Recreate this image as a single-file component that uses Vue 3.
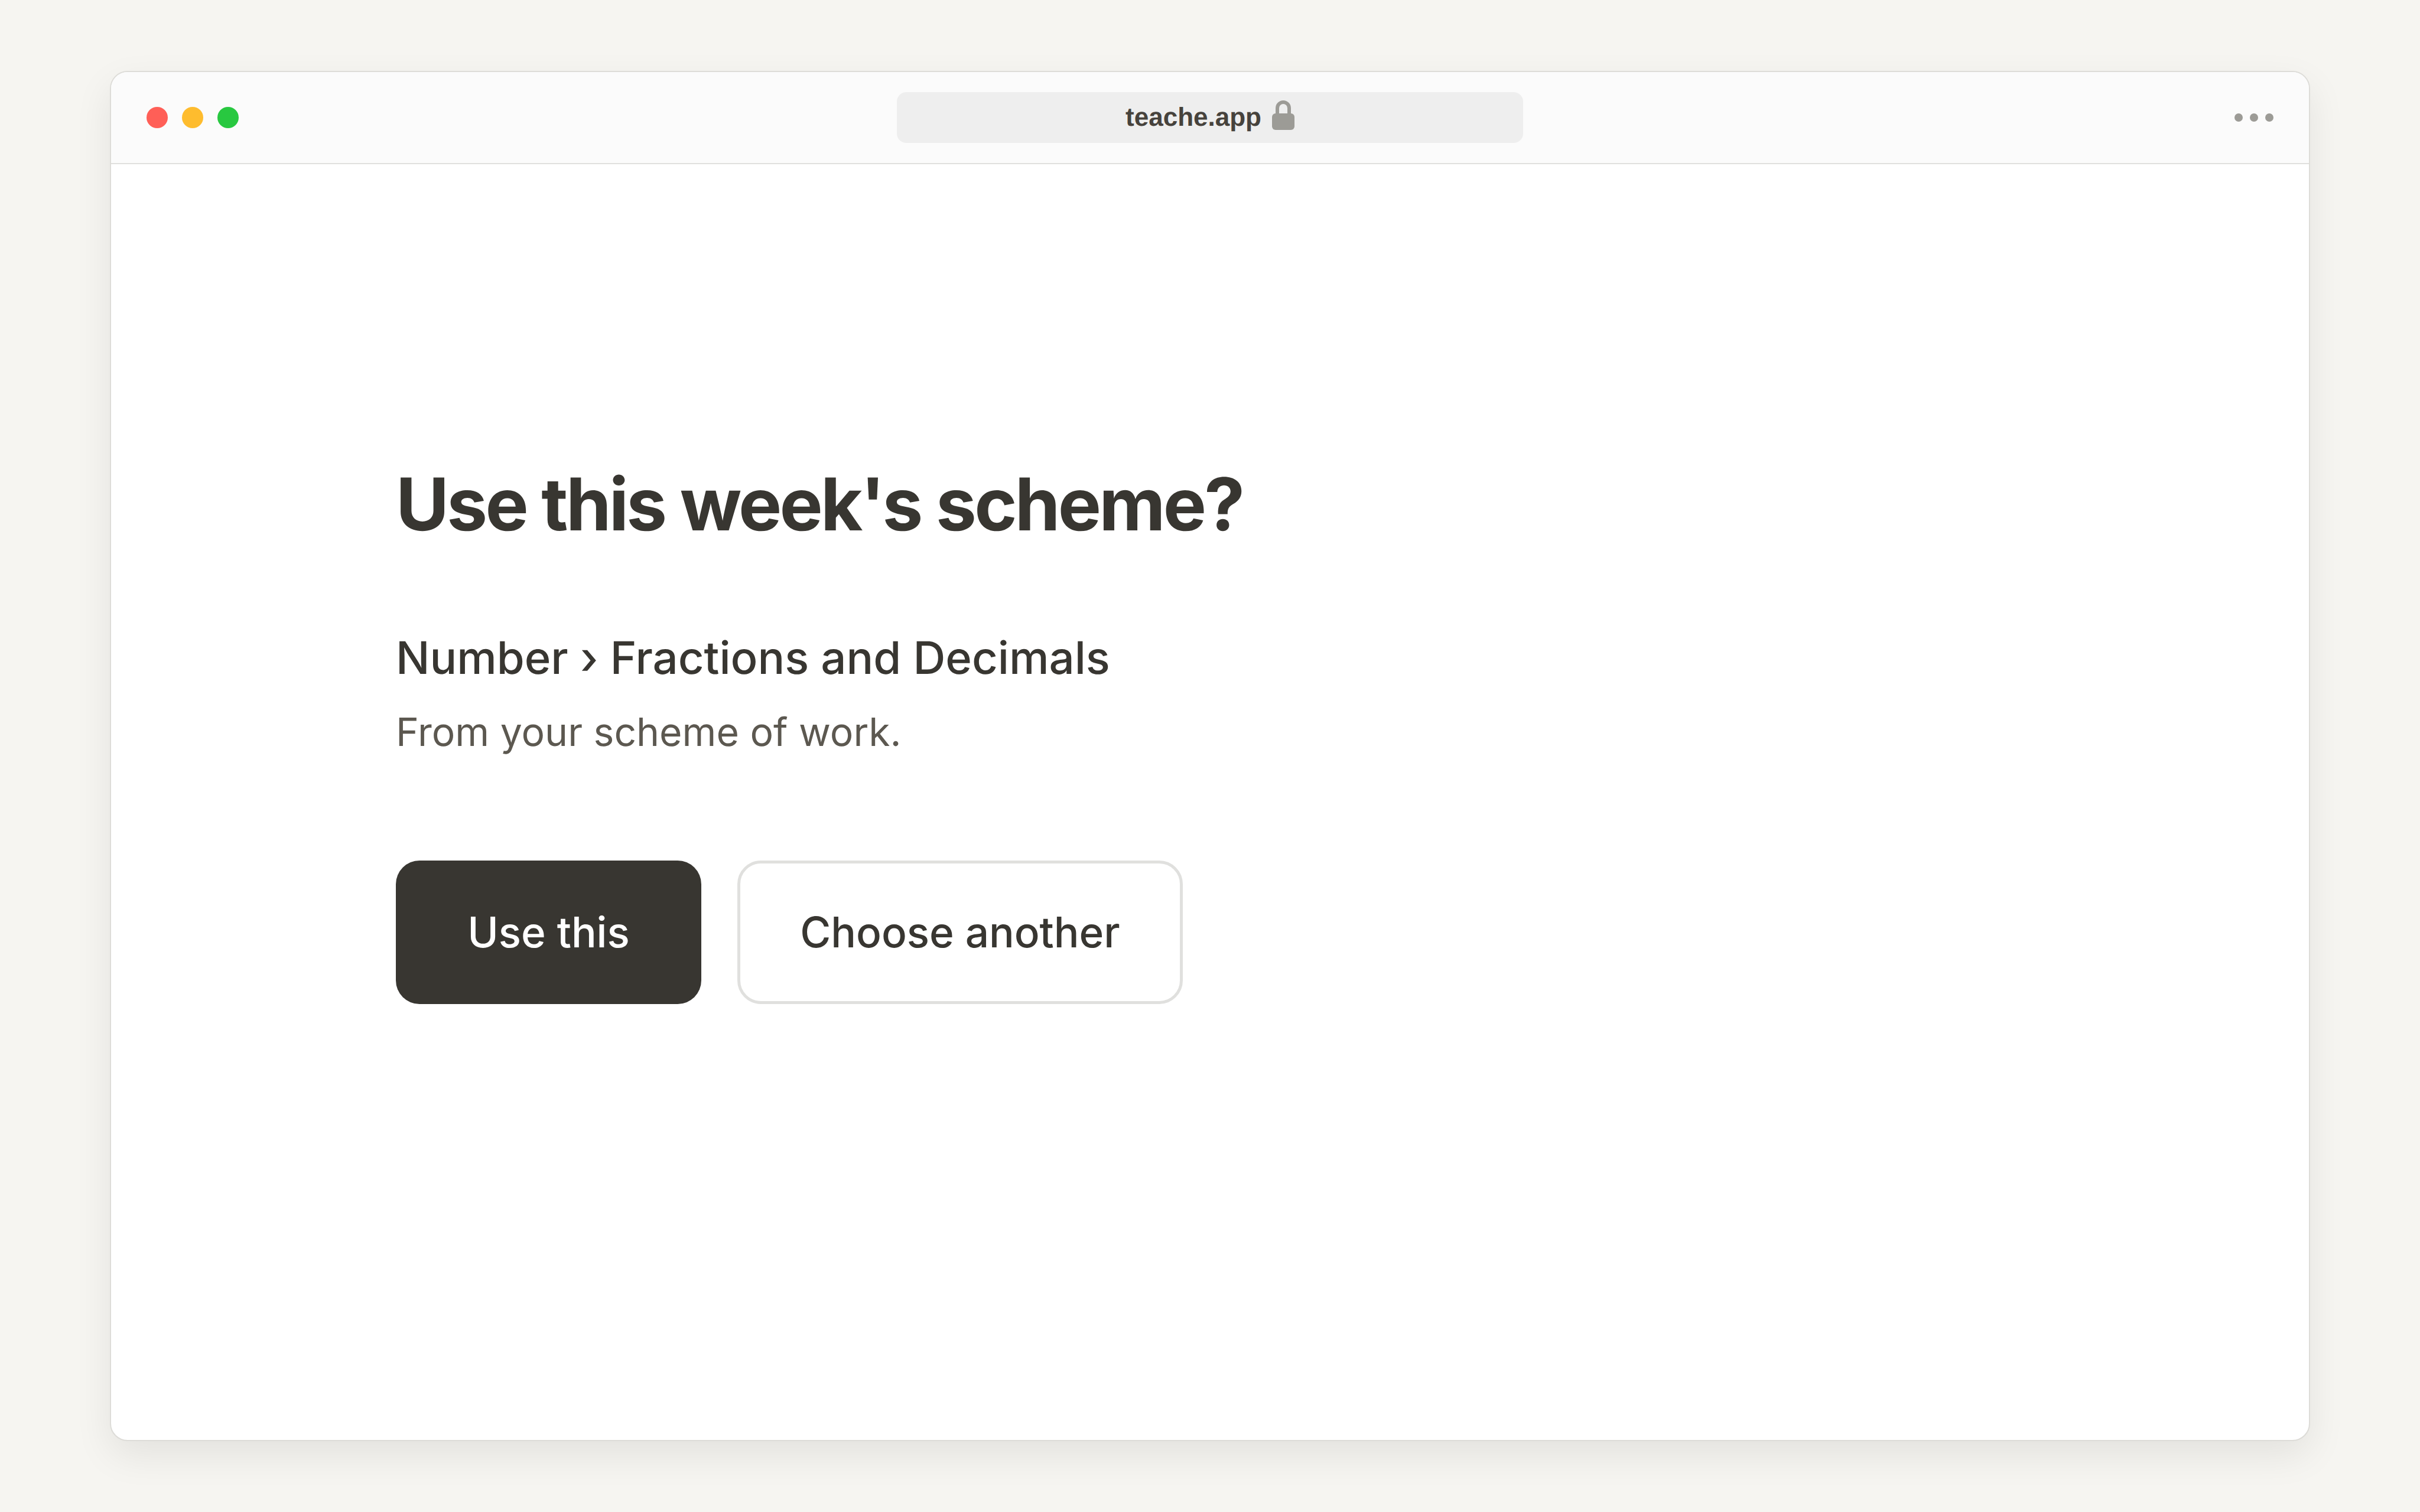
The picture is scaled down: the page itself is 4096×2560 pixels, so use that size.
<template>
  <div class="page">
    <div class="window">
      <header class="titlebar">
        <div class="lights">
          <span class="light red"></span>
          <span class="light yellow"></span>
          <span class="light green"></span>
        </div>
        <div class="address">
          <span class="domain">teache.app</span>
          <svg class="lock" viewBox="0 0 38 50" width="38" height="50" aria-hidden="true">
            <path d="M9 26V13A10 10 0 0 1 29 13V26" fill="none" stroke="#9c9b96" stroke-width="6" />
            <rect x="0" y="22" width="38" height="28" rx="6" fill="#9c9b96" />
          </svg>
        </div>
        <div class="more">
          <span v-for="n in 3" :key="n" class="more-dot"></span>
        </div>
      </header>

      <main class="content">
        <h1 class="title">Use this week's scheme?</h1>
        <p class="topic">Number › Fractions and Decimals</p>
        <p class="source">From your scheme of work.</p>
        <div class="actions">
          <button class="btn primary">Use this</button>
          <button class="btn secondary">Choose another</button>
        </div>
      </main>
    </div>
  </div>
</template>

<script setup>
</script>

<style>
body {
  margin: 0;
  background: #f6f5f1;
}
</style>

<style scoped>
.page {
  width: 4096px;
  height: 2560px;
  box-sizing: border-box;
  padding: 120px 186px;
  background: #f6f5f1;
  font-family: Inter, "Liberation Sans", sans-serif;
  text-rendering: geometricPrecision;
}

.window {
  height: 100%;
  box-sizing: border-box;
  display: flex;
  flex-direction: column;
  background: #fff;
  border: 2px solid #dddcd8;
  border-radius: 30px;
  overflow: hidden;
  box-shadow: 0 24px 64px rgba(0, 0, 0, 0.08);
}

.titlebar {
  height: 156px;
  flex-shrink: 0;
  box-sizing: border-box;
  display: grid;
  grid-template-columns: 1fr 1060px 1fr;
  align-items: center;
  padding: 0 60px;
  background: #fbfbfb;
  border-bottom: 2px solid #e0e0de;
}

.lights {
  display: flex;
  gap: 24px;
}

.light {
  width: 36px;
  height: 36px;
  border-radius: 50%;
}

.red {
  background: #ff5f57;
}

.yellow {
  background: #febc2e;
}

.green {
  background: #28c840;
}

.address {
  height: 86px;
  display: flex;
  align-items: center;
  justify-content: center;
  gap: 18px;
  background: #eeeeee;
  border-radius: 16px;
}

.domain {
  font-family: "Liberation Sans", Arial, sans-serif;
  font-size: 44px;
  font-weight: 700;
  color: #46423c;
}

.lock {
  display: block;
  margin-bottom: 8px;
}

.more {
  display: flex;
  justify-content: flex-end;
  gap: 12px;
}

.more-dot {
  width: 14px;
  height: 14px;
  border-radius: 50%;
  background: #9c9b96;
}

.content {
  flex: 1;
  padding: 505px 0 0 482px;
  color: #383631;
}

.title {
  margin: 0;
  font-size: 123px;
  line-height: 1.15;
  font-weight: 700;
  letter-spacing: -3.75px;
}

.topic {
  margin: 145px 0 0;
  font-size: 76px;
  line-height: 1.2;
  font-weight: 500;
}

.source {
  margin: 39px 0 0;
  font-size: 66px;
  line-height: 1.2;
  color: #5c5850;
}

.actions {
  display: flex;
  gap: 61px;
  margin-top: 178px;
}

.btn {
  height: 243px;
  box-sizing: border-box;
  font-family: inherit;
  font-size: 71px;
  font-weight: 500;
  border-radius: 40px;
}

.primary {
  width: 517px;
  border: 0;
  background: #383631;
  color: #fff;
}

.secondary {
  width: 754px;
  border: 5px solid #e0e0de;
  background: #fff;
  color: #383631;
}
</style>
